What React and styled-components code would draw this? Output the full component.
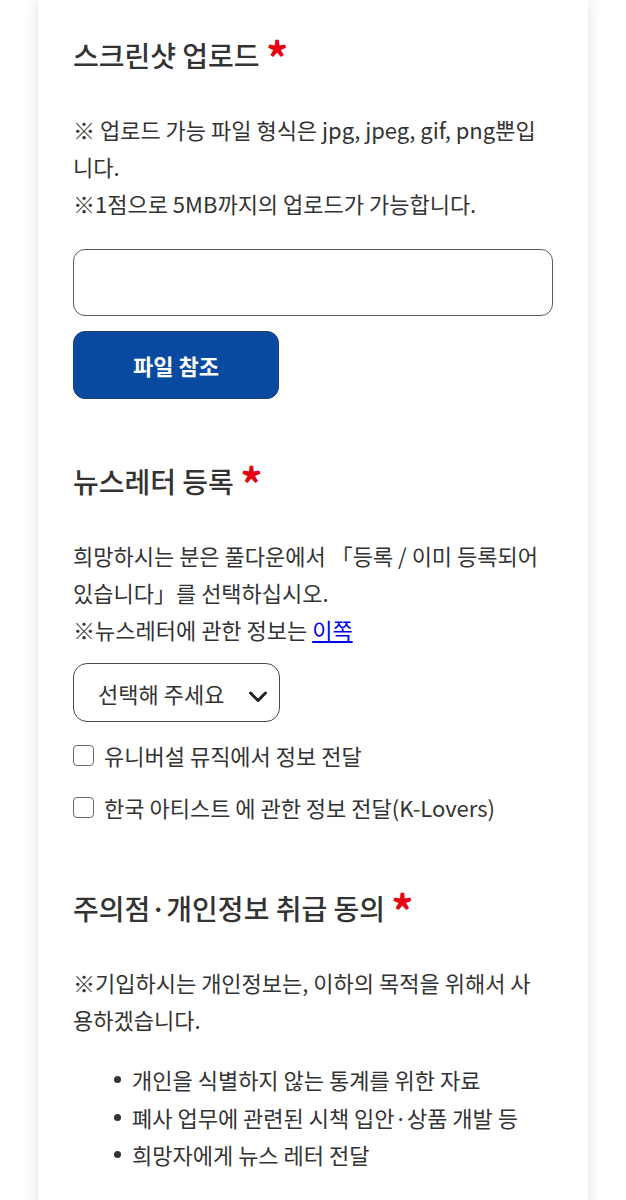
import React, { useState } from "react";
import styled, { createGlobalStyle } from "styled-components";

const GlobalStyle = createGlobalStyle`
  html, body {
    margin: 0;
    padding: 0;
    background: #ffffff;
  }
  body {
    font-family: "Noto Sans CJK KR", "Noto Sans", sans-serif;
    color: #333333;
  }
`;

const App = () => {
  const [checked, setChecked] = useState({ universal: false, klovers: false });
  const [choice, setChoice] = useState("");

  const toggle = (key) => setChecked({ ...checked, [key]: !checked[key] });

  return (
    <>
      <GlobalStyle />
      <Card>
        <Section>
          <Heading>
            스크린샷 업로드 <Required>*</Required>
          </Heading>
          <Note>
            ※ 업로드 가능 파일 형식은 jpg, jpeg, gif, png뿐입니다.
            <br />
            ※1점으로 5MB까지의 업로드가 가능합니다.
          </Note>
          <FileField />
          <FileButton type="button">파일 참조</FileButton>
        </Section>

        <Section>
          <Heading>
            뉴스레터 등록 <Required>*</Required>
          </Heading>
          <Note>
            희망하시는 분은 풀다운에서 「등록 / 이미 등록되어 있습니다」를 선택하십시오.
            <br />
            ※뉴스레터에 관한 정보는 <Link href="#">이쪽</Link>
          </Note>
          <SelectBox>
            <Select value={choice} onChange={(e) => setChoice(e.target.value)}>
              <option value="">선택해 주세요</option>
              <option value="register">등록</option>
              <option value="already">이미 등록되어 있습니다</option>
            </Select>
            <Chevron viewBox="0 0 20 14" aria-hidden="true">
              <path d="M2.5 3 L10 10.5 L17.5 3" />
            </Chevron>
          </SelectBox>
          <CheckRow>
            <CheckBox
              type="checkbox"
              checked={checked.universal}
              onChange={() => toggle("universal")}
            />
            유니버설 뮤직에서 정보 전달
          </CheckRow>
          <CheckRow>
            <CheckBox
              type="checkbox"
              checked={checked.klovers}
              onChange={() => toggle("klovers")}
            />
            한국 아티스트 에 관한 정보 전달(K-Lovers)
          </CheckRow>
        </Section>

        <Section>
          <Heading>
            주의점·개인정보 취급 동의 <Required>*</Required>
          </Heading>
          <Note>
            ※기입하시는 개인정보는, 이하의 목적을 위해서 사<br />용하겠습니다.
          </Note>
          <Bullets>
            <li>개인을 식별하지 않는 통계를 위한 자료</li>
            <li>폐사 업무에 관련된 시책 입안·상품 개발 등</li>
            <li>희망자에게 뉴스 레터 전달</li>
          </Bullets>
        </Section>
      </Card>
    </>
  );
};

const Card = styled.div`
  width: 550px;
  margin: 0 38px;
  min-height: 1200px;
  box-sizing: border-box;
  padding: 36px 35px 40px;
  background: #ffffff;
  box-shadow: 0 0 14px rgba(0, 0, 0, 0.13);
`;

const Section = styled.section`
  display: flex;
  flex-direction: column;
  align-items: flex-start;
  & + & {
    margin-top: 63px;
  }
`;

const Heading = styled.h2`
  margin: 0;
  font-size: 28px;
  line-height: 38px;
  font-weight: 500;
  color: #333333;
`;

const Required = styled.span`
  color: #e60012;
  font-size: 44px;
  font-weight: 700;
  line-height: 0;
  vertical-align: -8px;
`;

const Note = styled.p`
  margin: 37px 0 0;
  font-size: 22px;
  line-height: 37px;
  color: #333333;
`;

const Link = styled.a`
  color: #0000ee;
  text-decoration: underline;
`;

const FileField = styled.div`
  align-self: stretch;
  height: 67px;
  margin-top: 27px;
  box-sizing: border-box;
  border: 1px solid #5a5a5a;
  border-radius: 12px;
  background: #ffffff;
`;

const FileButton = styled.button`
  width: 206px;
  height: 68px;
  margin-top: 15px;
  border: 1px solid #1d3f73;
  border-radius: 12px;
  background: #074aa0;
  color: #ffffff;
  font-family: "Noto Sans CJK KR", "Noto Sans", sans-serif;
  font-size: 22px;
  font-weight: 700;
  cursor: pointer;
`;

const SelectBox = styled.div`
  position: relative;
  margin-top: 15px;
  width: 207px;
  height: 59px;
`;

const Select = styled.select`
  appearance: none;
  width: 100%;
  height: 100%;
  box-sizing: border-box;
  padding: 0 40px 0 24px;
  border: 1px solid #4a4a4a;
  border-radius: 14px;
  background: #ffffff;
  color: #333333;
  font-family: "Noto Sans CJK KR", "Noto Sans", sans-serif;
  font-size: 22px;
  cursor: pointer;
`;

const Chevron = styled.svg`
  position: absolute;
  right: 12px;
  top: 27px;
  width: 20px;
  height: 14px;
  pointer-events: none;
  fill: none;
  stroke: #222222;
  stroke-width: 3;
  stroke-linecap: round;
  stroke-linejoin: round;
`;

const CheckRow = styled.label`
  display: flex;
  align-items: center;
  gap: 10px;
  margin-top: 15px;
  font-size: 22px;
  line-height: 37px;
  color: #333333;
  cursor: pointer;
`;

const CheckBox = styled.input`
  appearance: none;
  margin: 0;
  width: 21px;
  height: 21px;
  box-sizing: border-box;
  border: 1px solid #6a6a6a;
  border-radius: 4px;
  background: #ffffff;
  cursor: pointer;
  &:checked {
    background: #074aa0;
    border-color: #074aa0;
  }
`;

const Bullets = styled.ul`
  list-style: none;
  margin: 23px 0 0;
  padding: 0 0 0 41px;
  font-size: 22px;
  line-height: 37.5px;
  color: #333333;

  li {
    display: flex;
    align-items: center;
    gap: 11px;
  }

  li::before {
    content: "";
    width: 7px;
    height: 7px;
    border-radius: 50%;
    background: #333333;
    flex-shrink: 0;
  }
`;

export default App;
